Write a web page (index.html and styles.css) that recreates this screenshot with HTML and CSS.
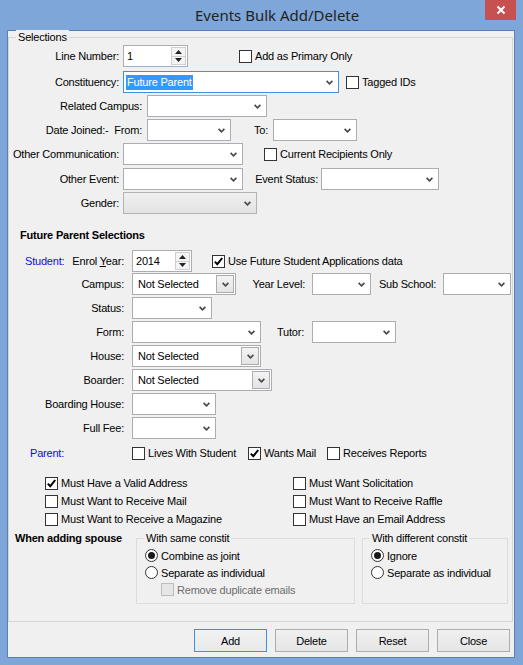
FILE: index.html
```html
<!DOCTYPE html>
<html>
<head>
<meta charset="utf-8">
<title>Events Bulk Add/Delete</title>
<link rel="stylesheet" href="styles.css">
</head>
<body>
<div class="window">
  <div class="titlebar">
    <span class="title">Events Bulk Add/Delete</span>
    <div class="close"><svg width="10" height="10" viewBox="0 0 10 10"><path d="M1.5 1.5 L8.5 8.5 M8.5 1.5 L1.5 8.5" stroke="#fff" stroke-width="2"/></svg></div>
  </div>
  <div class="client">
    <div class="group selections">
      <span class="legend">Selections</span>

      <div class="row mt7">
        <span class="lbl w110">Line Number:</span>
        <div class="spin w65 ml4"><span class="val">1</span><div class="spinbtns"><span class="sb"><svg width="7" height="4" viewBox="0 0 7 4"><path d="M3.5 0 L7 4 L0 4Z" fill="#222"/></svg></span><span class="sb"><svg width="7" height="4" viewBox="0 0 7 4"><path d="M0 0 L7 0 L3.5 4Z" fill="#222"/></svg></span></div></div>
        <label class="chk ml51"><span class="box"></span><span>Add as Primary Only</span></label>
      </div>

      <div class="row mt4">
        <span class="lbl w110">Constituency:</span>
        <div class="combo focus w216 ml4"><span class="sel">Future Parent</span><svg class="chev" width="7" height="5" viewBox="0 0 7 5"><path d="M0.6 0.8 L3.5 3.8 L6.4 0.8" fill="none" stroke="#4a4a4a" stroke-width="1.7"/></svg></div>
        <label class="chk ml7"><span class="box"></span><span>Tagged IDs</span></label>
      </div>

      <div class="row mt2">
        <span class="lbl w133">Related Campus:</span>
        <div class="combo w120 ml5"><span></span><svg class="chev" width="7" height="5" viewBox="0 0 7 5"><path d="M0.6 0.8 L3.5 3.8 L6.4 0.8" fill="none" stroke="#4a4a4a" stroke-width="1.7"/></svg></div>
      </div>

      <div class="row mt2">
        <span class="lbl w133">Date Joined:-&nbsp; From:</span>
        <div class="combo w84 ml5"><span></span><svg class="chev" width="7" height="5" viewBox="0 0 7 5"><path d="M0.6 0.8 L3.5 3.8 L6.4 0.8" fill="none" stroke="#4a4a4a" stroke-width="1.7"/></svg></div>
        <span class="lbl w21 ml16">To:</span>
        <div class="combo w84 ml5"><span></span><svg class="chev" width="7" height="5" viewBox="0 0 7 5"><path d="M0.6 0.8 L3.5 3.8 L6.4 0.8" fill="none" stroke="#4a4a4a" stroke-width="1.7"/></svg></div>
      </div>

      <div class="row mt2">
        <span class="lbl w110">Other Communication:</span>
        <div class="combo w120 ml4"><span></span><svg class="chev" width="7" height="5" viewBox="0 0 7 5"><path d="M0.6 0.8 L3.5 3.8 L6.4 0.8" fill="none" stroke="#4a4a4a" stroke-width="1.7"/></svg></div>
        <label class="chk ml21"><span class="box"></span><span>Current Recipients Only</span></label>
      </div>

      <div class="row mt3">
        <span class="lbl w110">Other Event:</span>
        <div class="combo w120 ml4"><span></span><svg class="chev" width="7" height="5" viewBox="0 0 7 5"><path d="M0.6 0.8 L3.5 3.8 L6.4 0.8" fill="none" stroke="#4a4a4a" stroke-width="1.7"/></svg></div>
        <span class="lbl w71 ml4">Event Status:</span>
        <div class="combo w118 ml3"><span></span><svg class="chev" width="7" height="5" viewBox="0 0 7 5"><path d="M0.6 0.8 L3.5 3.8 L6.4 0.8" fill="none" stroke="#4a4a4a" stroke-width="1.7"/></svg></div>
      </div>

      <div class="row mt2">
        <span class="lbl w110">Gender:</span>
        <div class="combo disabled w134 ml4"><span></span><svg class="chev" width="7" height="5" viewBox="0 0 7 5"><path d="M0.6 0.8 L3.5 3.8 L6.4 0.8" fill="none" stroke="#4a4a4a" stroke-width="1.7"/></svg></div>
      </div>

      <div class="heading">Future Parent Selections</div>

      <div class="row mt8">
        <span class="lbl2 w115"><span class="blue">Student:</span><span>Enrol <u>Y</u>ear:</span></span>
        <div class="spin w60 ml8"><span class="val">2014</span><div class="spinbtns"><span class="sb"><svg width="7" height="4" viewBox="0 0 7 4"><path d="M3.5 0 L7 4 L0 4Z" fill="#222"/></svg></span><span class="sb"><svg width="7" height="4" viewBox="0 0 7 4"><path d="M0 0 L7 0 L3.5 4Z" fill="#222"/></svg></span></div></div>
        <label class="chk ml20"><span class="box"><svg width="11" height="11" viewBox="0 0 11 11"><path d="M1.8 5.6 L4.3 8.2 L9.2 2" fill="none" stroke="#000" stroke-width="2"/></svg></span><span>Use Future Student Applications data</span></label>
      </div>

      <div class="row mt1">
        <span class="lbl w115">Campus:</span>
        <div class="combo btn w104 ml8"><span class="txt">Not Selected</span><span class="cbtn"><svg width="7" height="5" viewBox="0 0 7 5"><path d="M0.6 0.8 L3.5 3.8 L6.4 0.8" fill="none" stroke="#4a4a4a" stroke-width="1.7"/></svg></span></div>
        <span class="lbl w65 ml4">Year Level:</span>
        <div class="combo w59 ml7"><span></span><svg class="chev" width="7" height="5" viewBox="0 0 7 5"><path d="M0.6 0.8 L3.5 3.8 L6.4 0.8" fill="none" stroke="#4a4a4a" stroke-width="1.7"/></svg></div>
        <span class="lbl w65">Sub School:</span>
        <div class="combo w68 ml7"><span></span><svg class="chev" width="7" height="5" viewBox="0 0 7 5"><path d="M0.6 0.8 L3.5 3.8 L6.4 0.8" fill="none" stroke="#4a4a4a" stroke-width="1.7"/></svg></div>
      </div>

      <div class="row mt2">
        <span class="lbl w115">Status:</span>
        <div class="combo w80 ml8"><span></span><svg class="chev" width="7" height="5" viewBox="0 0 7 5"><path d="M0.6 0.8 L3.5 3.8 L6.4 0.8" fill="none" stroke="#4a4a4a" stroke-width="1.7"/></svg></div>
      </div>

      <div class="row mt2">
        <span class="lbl w115">Form:</span>
        <div class="combo w129 ml8"><span></span><svg class="chev" width="7" height="5" viewBox="0 0 7 5"><path d="M0.6 0.8 L3.5 3.8 L6.4 0.8" fill="none" stroke="#4a4a4a" stroke-width="1.7"/></svg></div>
        <span class="lbl w43">Tutor:</span>
        <div class="combo w84 ml8"><span></span><svg class="chev" width="7" height="5" viewBox="0 0 7 5"><path d="M0.6 0.8 L3.5 3.8 L6.4 0.8" fill="none" stroke="#4a4a4a" stroke-width="1.7"/></svg></div>
      </div>

      <div class="row mt2">
        <span class="lbl w115">House:</span>
        <div class="combo btn w129 ml8"><span class="txt">Not Selected</span><span class="cbtn"><svg width="7" height="5" viewBox="0 0 7 5"><path d="M0.6 0.8 L3.5 3.8 L6.4 0.8" fill="none" stroke="#4a4a4a" stroke-width="1.7"/></svg></span></div>
      </div>

      <div class="row mt2">
        <span class="lbl w115">Boarder:</span>
        <div class="combo btn w140 ml8"><span class="txt">Not Selected</span><span class="cbtn"><svg width="7" height="5" viewBox="0 0 7 5"><path d="M0.6 0.8 L3.5 3.8 L6.4 0.8" fill="none" stroke="#4a4a4a" stroke-width="1.7"/></svg></span></div>
      </div>

      <div class="row mt2">
        <span class="lbl w115">Boarding House:</span>
        <div class="combo w84 ml8"><span></span><svg class="chev" width="7" height="5" viewBox="0 0 7 5"><path d="M0.6 0.8 L3.5 3.8 L6.4 0.8" fill="none" stroke="#4a4a4a" stroke-width="1.7"/></svg></div>
      </div>

      <div class="row mt2">
        <span class="lbl w115">Full Fee:</span>
        <div class="combo w84 ml8"><span></span><svg class="chev" width="7" height="5" viewBox="0 0 7 5"><path d="M0.6 0.8 L3.5 3.8 L6.4 0.8" fill="none" stroke="#4a4a4a" stroke-width="1.7"/></svg></div>
      </div>

      <div class="row short mt6">
        <span class="lbl3 w115"><span class="blue">Parent:</span></span>
        <label class="chk ml8 w116"><span class="box"></span><span>Lives With Student</span></label>
        <label class="chk w79"><span class="box"><svg width="11" height="11" viewBox="0 0 11 11"><path d="M1.8 5.6 L4.3 8.2 L9.2 2" fill="none" stroke="#000" stroke-width="2"/></svg></span><span>Wants Mail</span></label>
        <label class="chk"><span class="box"></span><span>Receives Reports</span></label>
      </div>

      <div class="musts">
        <label class="chk"><span class="box"><svg width="11" height="11" viewBox="0 0 11 11"><path d="M1.8 5.6 L4.3 8.2 L9.2 2" fill="none" stroke="#000" stroke-width="2"/></svg></span><span>Must Have a Valid Address</span></label>
        <label class="chk"><span class="box"></span><span>Must Want Solicitation</span></label>
        <label class="chk"><span class="box"></span><span>Must Want to Receive Mail</span></label>
        <label class="chk"><span class="box"></span><span>Must Want to Receive Raffle</span></label>
        <label class="chk"><span class="box"></span><span>Must Want to Receive a Magazine</span></label>
        <label class="chk"><span class="box"></span><span>Must Have an Email Address</span></label>
      </div>

      <div class="spouse">
        <span class="spouse-lbl">When adding spouse</span>
        <div class="group sub same">
          <span class="legend">With same constit</span>
          <label class="rad"><span class="circle on"></span><span>Combine as joint</span></label>
          <label class="rad"><span class="circle"></span><span>Separate as individual</span></label>
          <label class="chk dis"><span class="box"></span><span>Remove duplicate emails</span></label>
        </div>
        <div class="group sub diff">
          <span class="legend">With different constit</span>
          <label class="rad"><span class="circle on"></span><span>Ignore</span></label>
          <label class="rad"><span class="circle"></span><span>Separate as individual</span></label>
        </div>
      </div>
    </div>

    <div class="buttons">
      <button class="btnx default">Add</button>
      <button class="btnx">Delete</button>
      <button class="btnx">Reset</button>
      <button class="btnx">Close</button>
    </div>
  </div>
</div>
</body>
</html>
```

FILE: styles.css
```css
* { box-sizing: border-box; }

body {
  margin: 0;
  font-family: "Liberation Sans", Arial, sans-serif;
  font-size: 11px;
  letter-spacing: -0.2px;
  color: #000;
  background: #7fa6d8;
}

.window {
  width: 523px;
  height: 665px;
  background: #7fa6d8;
  display: flex;
  flex-direction: column;
}

.titlebar {
  height: 30px;
  flex: none;
  display: flex;
  align-items: flex-start;
}

.title {
  font-family: "Noto Sans", "Open Sans", sans-serif;
  font-size: 15px;
  letter-spacing: 0;
  color: #222;
  line-height: 20px;
  margin-left: 195px;
  margin-top: 5px;
}

.close {
  margin-left: auto;
  margin-right: 7px;
  width: 31px;
  height: 20px;
  background: #c75050;
  display: flex;
  align-items: center;
  justify-content: center;
}

.client {
  margin-left: 7px;
  width: 508px;
  height: 628px;
  border: 1px solid #5b80b3;
  background: #f0f0f0;
  flex: none;
}

.group {
  position: relative;
  border: 1px solid #d5d5d5;
}

.legend {
  position: absolute;
  top: -8px;
  left: 7px;
  padding: 0 2px;
  line-height: 14px;
  background: #f0f0f0;
  white-space: nowrap;
}

.selections {
  margin-top: 6px;
  width: 505px;
  height: 585px;
}

.row {
  display: flex;
  align-items: center;
  height: 22px;
  white-space: nowrap;
}
.row.short { height: 16px; }

.mt1 { margin-top: 1px; }
.mt2 { margin-top: 2px; }
.mt3 { margin-top: 3px; }
.mt4 { margin-top: 4px; }
.mt6 { margin-top: 6px; }
.mt7 { margin-top: 7px; }
.mt8 { margin-top: 8px; }

.ml3 { margin-left: 3px; }
.ml4 { margin-left: 4px; }
.ml5 { margin-left: 5px; }
.ml7 { margin-left: 7px; }
.ml8 { margin-left: 8px; }
.ml16 { margin-left: 16px; }
.ml20 { margin-left: 20px; }
.ml21 { margin-left: 21px; }
.ml51 { margin-left: 51px; }

.w21 { width: 21px; }
.w43 { width: 43px; }
.w59 { width: 59px; }
.w60 { width: 60px; }
.w65 { width: 65px; }
.w68 { width: 68px; }
.w71 { width: 71px; }
.w79 { width: 79px; }
.w80 { width: 80px; }
.w84 { width: 84px; }
.w104 { width: 104px; }
.w110 { width: 110px; }
.w115 { width: 115px; }
.w116 { width: 116px; }
.w118 { width: 118px; }
.w120 { width: 120px; }
.w129 { width: 129px; }
.w133 { width: 133px; }
.w134 { width: 134px; }
.w140 { width: 140px; }
.w216 { width: 216px; }

.lbl {
  flex: none;
  text-align: right;
  white-space: nowrap;
}
.lbl2 {
  flex: none;
  display: flex;
  justify-content: space-between;
  padding-left: 16px;
}
.lbl3 {
  flex: none;
  padding-left: 21px;
}
.blue { color: #0c0ce6; }

.heading {
  margin-top: 14px;
  height: 14px;
  line-height: 14px;
  padding-left: 11px;
  font-weight: bold;
}

/* combo boxes */
.combo {
  flex: none;
  height: 22px;
  border: 1px solid #abadb3;
  background: #fff;
  display: flex;
  align-items: center;
  justify-content: space-between;
  padding: 0 5px 0 3px;
}
.combo .chev { flex: none; }
.combo.focus { border-color: #3c93e6; padding-left: 2px; }
.combo .sel {
  background: #3399ff;
  color: #fff;
  line-height: 15px;
  padding: 0 1px;
}
.combo.disabled {
  background: linear-gradient(#f0f0f0, #e3e3e3);
  border-color: #b3b3b3;
}
.combo.btn { padding: 0 1px 0 5px; }
.combo .txt { line-height: 14px; }
.cbtn {
  width: 18px;
  height: 18px;
  border: 1px solid #adadad;
  background: linear-gradient(#f3f3f3, #e4e4e4);
  display: flex;
  align-items: center;
  justify-content: center;
}

/* spinners */
.spin {
  flex: none;
  height: 22px;
  border: 1px solid #abadb3;
  background: #fff;
  display: flex;
}
.spin .val {
  flex: 1;
  padding-left: 3px;
  line-height: 20px;
}
.spinbtns {
  width: 16px;
  display: flex;
  flex-direction: column;
  padding: 1px 1px 1px 0;
}
.sb {
  flex: 1;
  border: 1px solid #cfcfcf;
  background: #f4f4f4;
  display: flex;
  align-items: center;
  justify-content: center;
}
.sb + .sb { border-top: none; }

/* checkboxes */
.chk {
  display: flex;
  align-items: center;
  flex: none;
  white-space: nowrap;
}
.box {
  width: 13px;
  height: 13px;
  border: 1px solid #333;
  background: #fff;
  margin-right: 3px;
  display: flex;
  align-items: center;
  justify-content: center;
  flex: none;
}
.chk.dis { color: #6d6d6d; }
.chk.dis .box { border-color: #bcbcbc; background: #e6e6e6; }

.musts {
  margin-top: 13px;
  padding-left: 36px;
  display: grid;
  grid-template-columns: 248px 1fr;
  grid-auto-rows: 18px;
}

/* spouse section */
.spouse {
  margin-top: 3px;
  display: flex;
  align-items: flex-start;
}
.spouse-lbl {
  width: 127px;
  flex: none;
  padding-left: 6px;
  line-height: 14px;
  font-weight: bold;
}
.sub {
  margin-top: 7px;
  height: 66px;
  border-color: #dcdcdc;
  padding: 8px 0 0 8px;
  flex: none;
}
.same { width: 219px; }
.diff { width: 146px; margin-left: 7px; }

.rad {
  display: flex;
  align-items: center;
  height: 17px;
  white-space: nowrap;
}
.circle {
  width: 13px;
  height: 13px;
  border: 1px solid #333;
  border-radius: 50%;
  background: #fff;
  margin-right: 3px;
  display: flex;
  align-items: center;
  justify-content: center;
  flex: none;
}
.circle.on::after {
  content: "";
  width: 7px;
  height: 7px;
  border-radius: 50%;
  background: #1a1a1a;
}
.sub .chk.dis {
  height: 17px;
  padding-left: 16px;
}

/* buttons */
.buttons {
  margin-top: 7px;
  display: flex;
  justify-content: flex-end;
  gap: 8px;
  padding-right: 4px;
}
.btnx {
  width: 73px;
  height: 23px;
  border: 1px solid #adadad;
  background: linear-gradient(#f0f0f0, #e5e5e5);
  font-family: "Liberation Sans", Arial, sans-serif;
  font-size: 11px;
  letter-spacing: -0.2px;
  color: #000;
  padding: 0;
}
.btnx.default {
  border-color: #3c93e6;
  background: linear-gradient(#f1f1f1, #e9e9e9);
}
```
